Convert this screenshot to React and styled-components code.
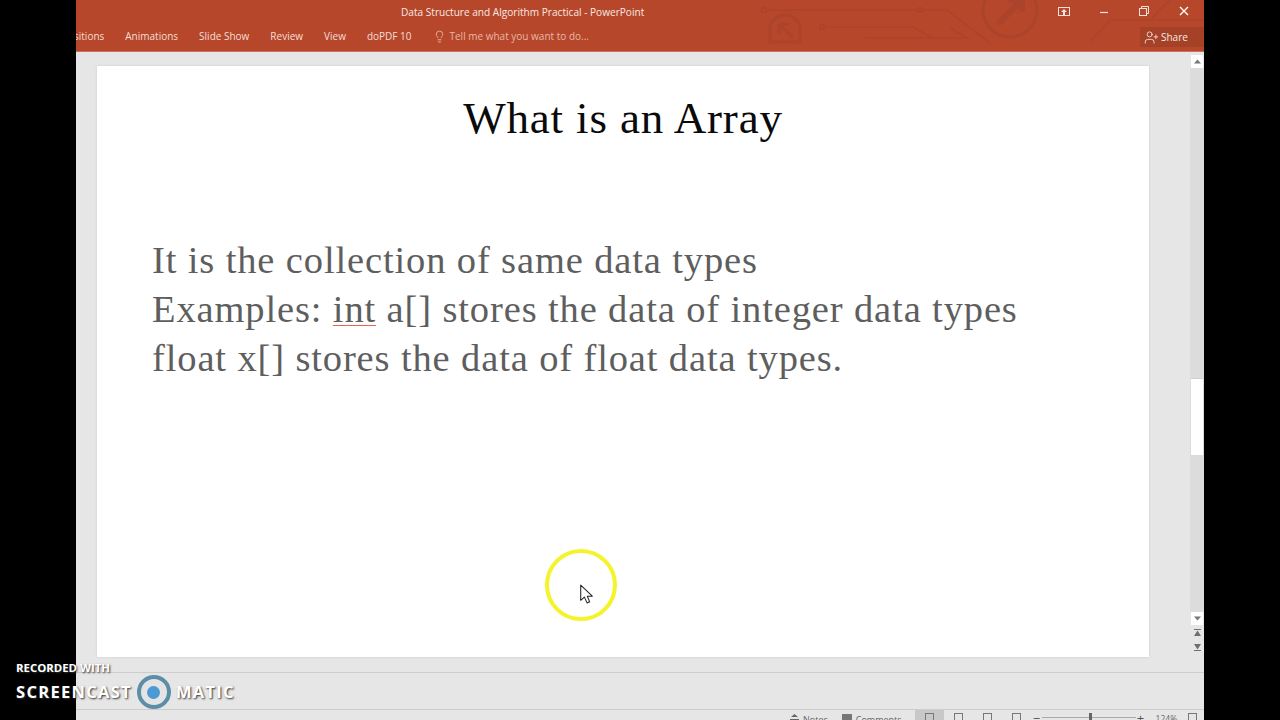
import React from 'react';
import styled, { createGlobalStyle } from 'styled-components';
import { Lightbulb, UserPlus } from 'lucide-react';

const GlobalStyle = createGlobalStyle`
  html, body {
    margin: 0;
    padding: 0;
    height: 100%;
    background: #000;
    overflow: hidden;
  }
  #root {
    height: 100%;
  }
`;

const tabs = ['sitions', 'Animations', 'Slide Show', 'Review', 'View', 'doPDF 10'];

const CircuitArt = () => (
  <svg width="444" height="52" viewBox="0 0 444 52" fill="none" stroke="#a8442a" strokeWidth="1.6" opacity="0.75">
    <path d="M6 10 H187 L230 43" />
    <circle cx="4" cy="10" r="2.5" />
    <circle cx="160" cy="10" r="2.5" />
    <path d="M63 27 H153 L172 38 H207 L190 28" />
    <circle cx="62" cy="27" r="2.5" />
    <path d="M105 38 H172" />
    <path d="M10 42 V28 a15 13 0 0 1 30 0 V42 Z" strokeWidth="3" />
    <path d="M19 24 V34 M19 24 H29 M19 24 L33 38" strokeWidth="3" />
    <circle cx="250" cy="10" r="27" strokeWidth="3" />
    <path d="M238 24 L260 2 M248 0 H262 V12" strokeWidth="6" />
    <path d="M330 42 L350 20 H444" />
    <path d="M390 20 L410 0" />
  </svg>
);

const Cursor = () => (
  <svg width="15" height="21" viewBox="0 0 14 20">
    <path d="M1.5 1 V15.5 L5 12.5 L7.5 18 L10 17 L7.8 11.6 H12.5 Z" fill="#fff" stroke="#222" strokeWidth="1" strokeLinejoin="round" />
  </svg>
);

const Arrow = ({ down }) => (
  <svg width="9" height="5" viewBox="0 0 9 5" style={{ transform: down ? 'rotate(180deg)' : 'none' }}>
    <path d="M4.5 0.5 L8 4.5 H1 Z" fill="#777" />
  </svg>
);

const DoubleArrow = ({ down }) => (
  <svg width="9" height="9" viewBox="0 0 9 9" style={{ transform: down ? 'rotate(180deg)' : 'none' }}>
    <path d="M1 1 H8 V2 H1 Z M4.5 2.5 L8 8 H1 Z" fill="#6f6f6f" />
  </svg>
);

export default function App() {
  return (
    <>
      <GlobalStyle />
      <Page>
        <PptWindow>
          <Header>
            <ArtLayer>
              <CircuitArt />
            </ArtLayer>
            <TitleBar>
              <DocTitle>Data Structure and Algorithm Practical - PowerPoint</DocTitle>
              <WindowControls>
                <WinButton>
                  <svg width="12" height="9" viewBox="0 0 12 9" fill="none">
                    <rect x="0.5" y="0.5" width="11" height="8" stroke="#f4e3dd" />
                    <path d="M6 2 L9 5 H7 V8 H5 V5 H3 Z" fill="#f4e3dd" />
                  </svg>
                </WinButton>
                <WinButton>
                  <svg width="10" height="10" viewBox="0 0 10 10">
                    <path d="M1 6.5 H9" stroke="#f4e3dd" strokeWidth="1.2" />
                  </svg>
                </WinButton>
                <WinButton>
                  <svg width="10" height="10" viewBox="0 0 10 10" fill="none" stroke="#f4e3dd">
                    <rect x="0.5" y="2.5" width="7" height="7" />
                    <path d="M2.5 2.5 V0.5 H9.5 V7.5 H7.5" />
                  </svg>
                </WinButton>
                <WinButton>
                  <svg width="10" height="10" viewBox="0 0 10 10">
                    <path d="M1 1 L9 9 M9 1 L1 9" stroke="#fff" strokeWidth="1.4" />
                  </svg>
                </WinButton>
              </WindowControls>
            </TitleBar>
            <Ribbon>
              {tabs.map((t, i) => (
                <Tab key={t} $cut={i === 0}>
                  {t}
                </Tab>
              ))}
              <TellMe>
                <Lightbulb size={13} strokeWidth={1.4} color="#ecc9bd" />
                Tell me what you want to do...
              </TellMe>
              <ShareButton>
                <UserPlus size={15} strokeWidth={1.3} />
                Share
              </ShareButton>
            </Ribbon>
          </Header>
          <Workspace>
            <Canvas>
              <Slide>
                <SlideTitle>What is an Array</SlideTitle>
                <SlideBody>
                  <BodyLine>It is the collection of same data types</BodyLine>
                  <BodyLine>
                    Examples: <Misspelled>int</Misspelled> a[] stores the data of integer data types
                  </BodyLine>
                  <BodyLine>float x[] stores the data of float data types.</BodyLine>
                </SlideBody>
              </Slide>
            </Canvas>
            <ScrollBar>
              <ScrollButton>
                <Arrow />
              </ScrollButton>
              <ScrollTrack>
                <ScrollThumb />
              </ScrollTrack>
              <ScrollButton>
                <Arrow down />
              </ScrollButton>
              <PageButton>
                <DoubleArrow />
              </PageButton>
              <PageButton>
                <DoubleArrow down />
              </PageButton>
            </ScrollBar>
          </Workspace>
          <NotesStrip />
          <StatusBar>
            <StatusItem>
              <svg width="9" height="6" viewBox="0 0 9 6">
                <path d="M4.5 0 L8 3 H1 Z M0 5 H9 V6 H0 Z" fill="#666" />
              </svg>
              Notes
            </StatusItem>
            <StatusItem>
              <CommentIcon />
              Comments
            </StatusItem>
            <ViewButtons>
              <ViewButton $active>
                <ViewGlyph />
              </ViewButton>
              <ViewButton>
                <ViewGlyph />
              </ViewButton>
              <ViewButton>
                <ViewGlyph />
              </ViewButton>
              <ViewButton>
                <ViewGlyph />
              </ViewButton>
            </ViewButtons>
            <Zoom>
              <ZoomSign>−</ZoomSign>
              <ZoomTrack>
                <ZoomKnob />
              </ZoomTrack>
              <ZoomSign>+</ZoomSign>
              <ZoomValue>124%</ZoomValue>
              <ViewGlyph />
            </Zoom>
          </StatusBar>
        </PptWindow>
        <Highlight>
          <Cursor />
        </Highlight>
        <Watermark>
          <RecordedWith>RECORDED WITH</RecordedWith>
          <BrandRow>
            <BrandText>SCREENCAST</BrandText>
            <BrandRing>
              <BrandDot />
            </BrandRing>
            <BrandText>MATIC</BrandText>
          </BrandRow>
        </Watermark>
      </Page>
    </>
  );
}

const Page = styled.div`
  position: relative;
  width: 1280px;
  height: 720px;
  background: #000;
  overflow: hidden;
  padding: 0 76px;
  box-sizing: border-box;
`;

const PptWindow = styled.div`
  width: 1128px;
  height: 720px;
  display: flex;
  flex-direction: column;
  background: #e6e6e6;
  overflow: hidden;
  font-family: 'Open Sans', 'Liberation Sans', sans-serif;
`;

const Header = styled.div`
  position: relative;
  flex: none;
  background: #b7472a;
`;

const ArtLayer = styled.div`
  position: absolute;
  left: 684px;
  top: 0;
  height: 52px;
`;

const TitleBar = styled.div`
  position: relative;
  height: 22px;
  display: flex;
  align-items: center;
  justify-content: space-between;
  color: #f7e9e4;
`;

const DocTitle = styled.div`
  margin: 1px 0 0 325px;
  font-size: 10.1px;
  white-space: nowrap;
`;

const WindowControls = styled.div`
  display: flex;
  gap: 25px;
  margin-right: 13px;
`;

const WinButton = styled.div`
  width: 15px;
  display: flex;
  justify-content: center;
  align-items: center;
`;

const Ribbon = styled.div`
  position: relative;
  height: 30px;
  display: flex;
  align-items: flex-start;
  padding-top: 7px;
  box-sizing: border-box;
  gap: 21px;
  border-bottom: 1px solid #c9735e;
  color: #f4dfd8;
  font-size: 10px;
`;

const Tab = styled.div`
  line-height: 15px;
  white-space: nowrap;
  margin-left: ${(p) => (p.$cut ? '-2px' : '0')};
`;

const TellMe = styled.div`
  display: flex;
  align-items: center;
  gap: 4px;
  line-height: 15px;
  color: #e6b8a9;
  white-space: nowrap;
`;

const ShareButton = styled.div`
  position: absolute;
  right: 0;
  top: 5px;
  width: 64px;
  height: 20px;
  display: flex;
  align-items: center;
  gap: 2px;
  padding-left: 4px;
  box-sizing: border-box;
  background: #a44127;
  color: #f7e9e4;
`;

const Workspace = styled.div`
  height: 620px;
  flex: none;
  display: flex;
`;

const Canvas = styled.div`
  flex: 1;
  padding: 14px 0 0 21px;
`;

const Slide = styled.div`
  width: 1052px;
  height: 591px;
  background: #fff;
  box-shadow: 0 0 2px #c9c9c9;
  font-family: 'Liberation Serif', 'Times New Roman', serif;
  overflow: hidden;
`;

const SlideTitle = styled.h1`
  margin: 23px 0 0;
  text-align: center;
  font-size: 45px;
  line-height: 58px;
  font-weight: 400;
  letter-spacing: 0.85px;
  color: #0a0a0a;
`;

const SlideBody = styled.div`
  margin: 89px 0 0 55px;
  color: #5e5e5e;
  font-size: 38.5px;
  line-height: 49px;
  letter-spacing: 0.87px;
`;

const BodyLine = styled.div`
  white-space: nowrap;
`;

const Misspelled = styled.span`
  text-decoration-line: underline;
  text-decoration-style: solid;
  text-decoration-color: #e2625c;
  text-decoration-thickness: 1px;
  text-underline-offset: 3px;
`;

const ScrollBar = styled.div`
  width: 14px;
  flex: none;
  display: flex;
  flex-direction: column;
  align-items: flex-end;
  padding-top: 3px;
  height: 600px;
`;

const ScrollButton = styled.div`
  width: 12px;
  margin-right: 1px;
  height: 13px;
  flex: none;
  background: #fff;
  display: flex;
  align-items: center;
  justify-content: center;
`;

const ScrollTrack = styled.div`
  flex: 1;
  width: 14px;
  background: #dcdcdc;
  padding: 310px 1px 0 1px;
  box-sizing: border-box;
`;

const ScrollThumb = styled.div`
  width: 12px;
  height: 77px;
  background: #fff;
  border-top: 1px solid #cfcfcf;
  box-sizing: border-box;
`;

const PageButton = styled.div`
  width: 12px;
  margin-right: 1px;
  height: 15px;
  flex: none;
  display: flex;
  align-items: center;
  justify-content: center;
`;

const NotesStrip = styled.div`
  height: 37px;
  flex: none;
  border-top: 1px solid #cdcdcd;
  box-sizing: border-box;
`;

const StatusBar = styled.div`
  height: 11px;
  flex: none;
  border-top: 1px solid #cdcdcd;
  display: flex;
  padding-left: 714px;
  color: #666;
  font-size: 9px;
`;

const StatusItem = styled.div`
  display: flex;
  align-items: flex-start;
  gap: 4px;
  line-height: 14px;
  padding-top: 3px;
  margin-right: 14px;
  white-space: nowrap;
  svg {
    margin-top: 1px;
  }
`;

const CommentIcon = styled.div`
  width: 10px;
  height: 10px;
  margin-top: 1px;
  background: #777;
`;

const ViewButtons = styled.div`
  display: flex;
  margin-left: -1px;
`;

const ViewButton = styled.div`
  width: 29px;
  height: 11px;
  display: flex;
  justify-content: center;
  padding-top: 3px;
  box-sizing: border-box;
  background: ${(p) => (p.$active ? '#c8c8c8' : 'transparent')};
`;

const ViewGlyph = styled.div`
  width: 9px;
  height: 8px;
  border: 1px solid #777;
  box-sizing: border-box;
`;

const Zoom = styled.div`
  display: flex;
  align-items: flex-start;
  padding-top: 3px;
  margin-left: 1px;
`;

const ZoomSign = styled.div`
  width: 10px;
  line-height: 10px;
  font-size: 13px;
  color: #555;
  text-align: center;
`;

const ZoomTrack = styled.div`
  position: relative;
  width: 94px;
  height: 1px;
  margin-top: 4px;
  background: #aaa;
`;

const ZoomKnob = styled.div`
  position: absolute;
  left: 47px;
  top: -4px;
  width: 3px;
  height: 9px;
  background: #666;
`;

const ZoomValue = styled.div`
  margin: 0 11px 0 10px;
  line-height: 12px;
  font-size: 8.5px;
`;

const Highlight = styled.div`
  position: absolute;
  left: 545px;
  top: 549px;
  width: 72px;
  height: 72px;
  box-sizing: border-box;
  border: 4px solid #f4f42c;
  border-radius: 50%;
  padding: 31px 0 0 30px;
`;

const Watermark = styled.div`
  position: absolute;
  left: 16px;
  top: 661px;
  color: #fff;
  font-family: 'Open Sans', 'Liberation Sans', sans-serif;
  font-weight: 700;
  text-shadow: 1px 1px 2px #333;
`;

const RecordedWith = styled.div`
  font-size: 11.4px;
  line-height: 14px;
`;

const BrandRow = styled.div`
  display: flex;
  align-items: center;
  gap: 5px;
`;

const BrandText = styled.div`
  font-size: 16.5px;
  line-height: 34px;
  letter-spacing: 1.3px;
`;

const BrandRing = styled.div`
  width: 34px;
  height: 34px;
  box-sizing: border-box;
  border: 4px solid #5d8ea8;
  border-radius: 50%;
  background: #e4e4e4;
  display: flex;
  align-items: center;
  justify-content: center;
`;

const BrandDot = styled.div`
  width: 13px;
  height: 13px;
  border-radius: 50%;
  background: #4a9ad4;
`;
